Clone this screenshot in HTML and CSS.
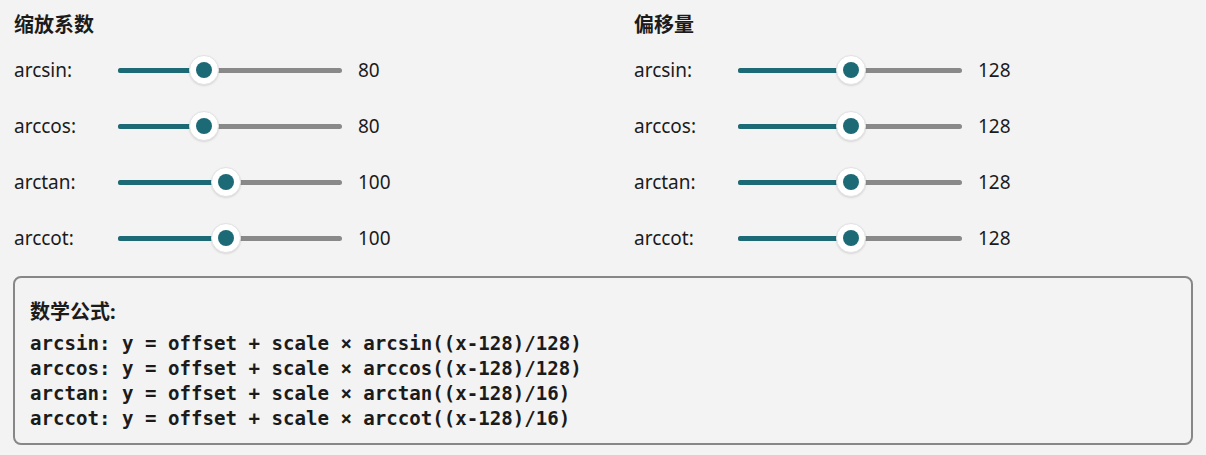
FILE: index.html
```html
<!DOCTYPE html>
<html lang="zh-CN">
<head>
    <meta charset="UTF-8">
    <meta name="viewport" content="width=device-width, initial-scale=1.0">
    <title>反三角函数参数</title>
    <link rel="stylesheet" href="styles.css">
</head>

<body>
    <div class="page">
        <div class="columns">
            <!-- 缩放系数 -->
            <section class="group">
                <h2 class="group-title">缩放系数</h2>
                <div class="row">
                    <span class="label">arcsin:</span>
                    <div class="slider">
                        <div class="track"><div class="fill" style="width: 38.5%;"></div></div>
                        <div class="thumb" style="left: 38.5%;"></div>
                    </div>
                    <span class="value">80</span>
                </div>
                <div class="row">
                    <span class="label">arccos:</span>
                    <div class="slider">
                        <div class="track"><div class="fill" style="width: 38.5%;"></div></div>
                        <div class="thumb" style="left: 38.5%;"></div>
                    </div>
                    <span class="value">80</span>
                </div>
                <div class="row">
                    <span class="label">arctan:</span>
                    <div class="slider">
                        <div class="track"><div class="fill" style="width: 48.2%;"></div></div>
                        <div class="thumb" style="left: 48.2%;"></div>
                    </div>
                    <span class="value">100</span>
                </div>
                <div class="row">
                    <span class="label">arccot:</span>
                    <div class="slider">
                        <div class="track"><div class="fill" style="width: 48.2%;"></div></div>
                        <div class="thumb" style="left: 48.2%;"></div>
                    </div>
                    <span class="value">100</span>
                </div>
            </section>

            <!-- 偏移量 -->
            <section class="group">
                <h2 class="group-title">偏移量</h2>
                <div class="row">
                    <span class="label">arcsin:</span>
                    <div class="slider">
                        <div class="track"><div class="fill" style="width: 50.4%;"></div></div>
                        <div class="thumb" style="left: 50.4%;"></div>
                    </div>
                    <span class="value">128</span>
                </div>
                <div class="row">
                    <span class="label">arccos:</span>
                    <div class="slider">
                        <div class="track"><div class="fill" style="width: 50.4%;"></div></div>
                        <div class="thumb" style="left: 50.4%;"></div>
                    </div>
                    <span class="value">128</span>
                </div>
                <div class="row">
                    <span class="label">arctan:</span>
                    <div class="slider">
                        <div class="track"><div class="fill" style="width: 50.4%;"></div></div>
                        <div class="thumb" style="left: 50.4%;"></div>
                    </div>
                    <span class="value">128</span>
                </div>
                <div class="row">
                    <span class="label">arccot:</span>
                    <div class="slider">
                        <div class="track"><div class="fill" style="width: 50.4%;"></div></div>
                        <div class="thumb" style="left: 50.4%;"></div>
                    </div>
                    <span class="value">128</span>
                </div>
            </section>
        </div>

        <!-- 数学公式 -->
        <div class="formula-box">
            <h3 class="formula-title">数学公式:</h3>
            <pre class="formula">arcsin: y = offset + scale × arcsin((x-128)/128)
arccos: y = offset + scale × arccos((x-128)/128)
arctan: y = offset + scale × arctan((x-128)/16)
arccot: y = offset + scale × arccot((x-128)/16)</pre>
        </div>
    </div>
</body>

</html>
```

FILE: styles.css
```css
/* Basic page styling */
body {
    margin: 0;
    padding: 0;
    background-color: #f3f3f3;
    color: #1b1b1b;
    font-family: 'Noto Sans', 'Noto Sans CJK SC', sans-serif;
}

.page {
    padding: 10px 13px 0 14px;
}

.columns {
    display: grid;
    grid-template-columns: 620px 1fr;
}

.group-title {
    margin: 0;
    height: 32px;
    line-height: 30px;
    font-size: 20px;
    font-weight: 700;
}

.row {
    display: flex;
    align-items: center;
    height: 56px;
}

.label {
    width: 104px;
    font-size: 19px;
}

/* Slider */
.slider {
    position: relative;
    display: flex;
    align-items: center;
    width: 224px;
    height: 32px;
}

.track {
    width: 100%;
    height: 5px;
    border-radius: 3px;
    background-color: #898989;
    overflow: hidden;
}

.fill {
    height: 100%;
    background-color: #1c6a76;
}

.thumb {
    position: absolute;
    top: 50%;
    width: 30px;
    height: 30px;
    border-radius: 50%;
    background-color: #ffffff;
    box-sizing: border-box;
    border: 1px solid #e2e2e2;
    box-shadow: 0 1px 2px rgba(0, 0, 0, 0.12);
    transform: translate(-50%, -50%);
}

.thumb::after {
    content: '';
    position: absolute;
    top: 6px;
    left: 6px;
    width: 16px;
    height: 16px;
    border-radius: 50%;
    background-color: #1c6a76;
}

.value {
    margin-left: 16px;
    font-size: 19px;
}

/* Formula box */
.formula-box {
    margin-top: 10px;
    margin-left: -1px;
    padding: 20px 15px 12px 15px;
    border: 2px solid #878787;
    border-radius: 8px;
}

.formula-title {
    margin: 0 0 5px 0;
    line-height: 28px;
    font-size: 20px;
    font-weight: 700;
}

.formula {
    margin: 0;
    font-family: 'DejaVu Sans Mono', monospace;
    font-size: 19.1px;
    font-weight: 700;
    line-height: 25px;
}
```
